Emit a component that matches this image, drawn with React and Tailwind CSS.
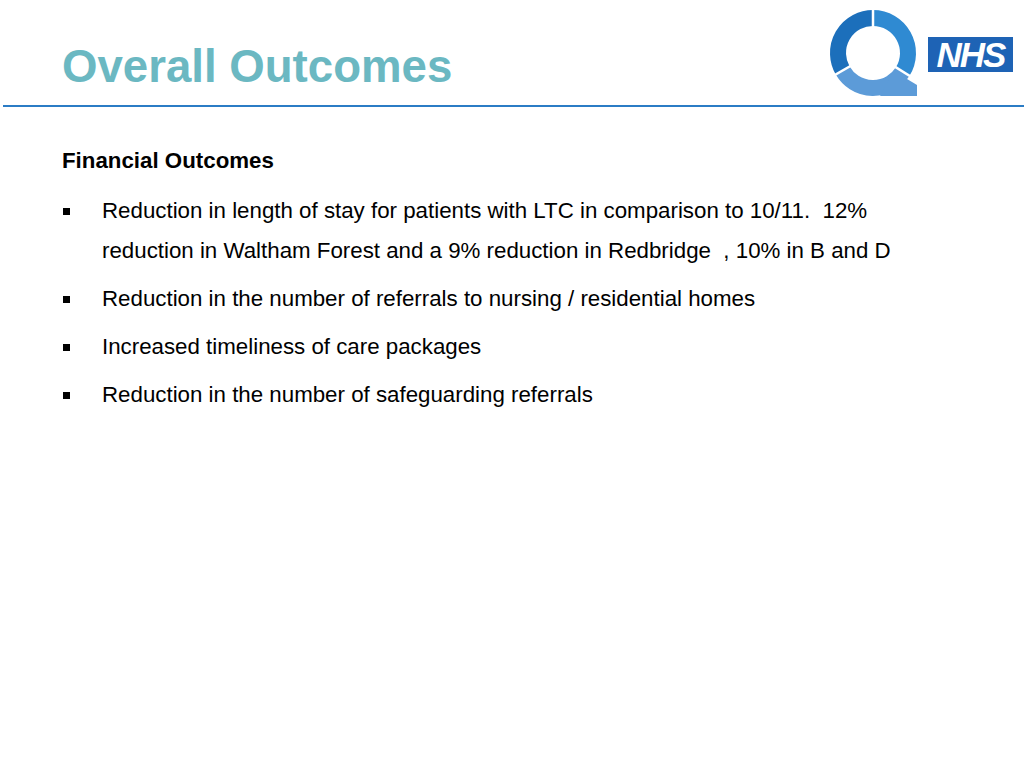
import React from "react";

function QLogo() {
  const cx = 45, cy = 45, r = 35;
  const pt = (deg, rad) => {
    const a = (deg * Math.PI) / 180;
    return [cx + rad * Math.cos(a), cy + rad * Math.sin(a)];
  };
  const arc = (a1, a2) => {
    const [x1, y1] = pt(a1, r);
    const [x2, y2] = pt(a2, r);
    const large = ((a2 - a1 + 360) % 360) > 180 ? 1 : 0;
    return `M${x1} ${y1} A${r} ${r} 0 ${large} 1 ${x2} ${y2}`;
  };
  const gap = (deg) => {
    const [x1, y1] = pt(deg, 20);
    const [x2, y2] = pt(deg, 52);
    return <line x1={x1} y1={y1} x2={x2} y2={y2} stroke="#ffffff" strokeWidth="2.5" />;
  };
  return (
    <svg width="95" height="95" viewBox="0 0 95 95">
      <path d={arc(150, 270)} fill="none" stroke="#1c6fbb" strokeWidth="16" />
      <path d={arc(270, 392)} fill="none" stroke="#2f8ad2" strokeWidth="16" />
      <path d={arc(32, 150)} fill="none" stroke="#5c9bd8" strokeWidth="16" />
      <polygon points="65,64 79,71 89,77 89,88 52,88" fill="#5c9bd8" />
      {gap(270)}
      {gap(150)}
      {gap(32)}
    </svg>
  );
}

function Bullet({ children }) {
  return (
    <li className="flex">
      <div className="w-[40px] shrink-0">
        <div className="ml-[1px] mt-[17px] h-[7px] w-[7px] bg-black" />
      </div>
      <div className="leading-[40px]">{children}</div>
    </li>
  );
}

export default function App() {
  return (
    <div
      className="relative h-[768px] w-[1024px] overflow-hidden bg-white text-black"
      style={{ fontFamily: '"Liberation Sans", Arial, sans-serif' }}
    >
      <header className="ml-[3px] flex h-[107px] items-start justify-between border-b-2 border-[#2b7cc5]">
        <h1 className="ml-[59px] pt-[41px] text-[45.6px] font-bold leading-[52px] text-[#6bb8c2]">
          Overall Outcomes
        </h1>
        <div className="mr-[11px] flex items-start">
          <div className="mt-[8px]">
            <QLogo />
          </div>
          <div className="ml-[5px] mt-[37px] flex h-[35px] w-[85px] items-center justify-center bg-[#1e63b5]">
            <span className="text-[35px] font-bold italic leading-none tracking-[-2px] text-white">
              NHS
            </span>
          </div>
        </div>
      </header>
      <main className="pl-[62px] pt-[41px] text-[22.3px]">
        <div className="font-bold leading-[26px]">Financial Outcomes</div>
        <ul className="mt-[17px] flex flex-col gap-2">
          <Bullet>
            Reduction in length of stay for patients with LTC in comparison to 10/11.&nbsp;&nbsp;12%
            <br />
            reduction in Waltham Forest and a 9% reduction in Redbridge&nbsp; , 10% in B and D
          </Bullet>
          <Bullet>Reduction in the number of referrals to nursing / residential homes</Bullet>
          <Bullet>Increased timeliness of care packages</Bullet>
          <Bullet>Reduction in the number of safeguarding referrals</Bullet>
        </ul>
      </main>
    </div>
  );
}
